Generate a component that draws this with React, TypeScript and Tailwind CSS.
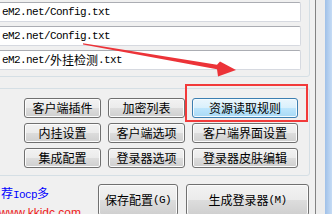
import type { ReactNode } from "react";

const cjk = { fontFamily: '"Noto Sans CJK SC", sans-serif' };
const mono = { fontFamily: '"Liberation Mono", "Noto Sans CJK SC", monospace' };

function Field({ children }: { children: ReactNode }) {
  return (
    <div
      className="flex h-[20px] items-center rounded-[2px] border border-[#d6d9e0] border-t-[#abadb3] bg-white pl-[6px] text-[11px] tracking-[-0.6px] text-black"
      style={mono}
    >
      {children}
    </div>
  );
}

function Cjk({ children }: { children: ReactNode }) {
  return (
    <span className="text-[12px] tracking-normal" style={cjk}>
      {children}
    </span>
  );
}

function WinButton({ label, hot, className = "" }: { label: ReactNode; hot?: boolean; className?: string }) {
  return (
    <button
      className={`flex items-center justify-center rounded-[3px] border text-[12px] leading-none text-black ${
        hot
          ? "border-[#3c7fb1] bg-[linear-gradient(#eaf6fd,#d9f0fc_50%,#bee6fd_50%,#a7d9f5)] shadow-[inset_0_0_0_1px_#f4fbfe]"
          : "border-[#707070] bg-[linear-gradient(#f2f2f2,#ebebeb_50%,#dddddd_50%,#cfcfcf)] shadow-[inset_0_0_0_1px_#fcfcfc]"
      } ${className}`}
      style={cjk}
    >
      {label}
    </button>
  );
}

const grid = [
  "客户端插件", "加密列表", "资源读取规则",
  "内挂设置", "客户端选项", "客户端界面设置",
  "集成配置", "登录器选项", "登录器皮肤编辑",
];

export default function App() {
  return (
    <div className="relative flex h-[214px] w-[332px] overflow-hidden bg-[#f0f0f0]">
      <div className="flex w-[315px] shrink-0 flex-col">
        {/* path fields */}
        <div className="-mt-[10px] -ml-[12px] mr-[5px] flex flex-col gap-[4px] rounded-[3px] border border-[#d5dfe5] pt-[11px] pr-[8px] pb-[6px] pl-[6px]">
          <Field>eM2.net/Config.txt</Field>
          <Field>eM2.net/Config.txt</Field>
          <Field>
            eM2.net/<Cjk>外挂检测</Cjk>.txt
          </Field>
        </div>

        {/* settings buttons */}
        <div className="-ml-[12px] mt-[11px] mr-[5px] rounded-[3px] border border-[#d5dfe5] pt-[9px] pb-[7px] pl-[35px]">
          <div className="grid grid-cols-[77px_77px_106px] gap-x-[7px] gap-y-[5px]">
            {grid.map((g) => (
              <WinButton key={g} label={g} hot={g === "资源读取规则"} className="h-[20px]" />
            ))}
          </div>
        </div>

        <div className="flex">
          <div className="flex w-[98px] shrink-0 flex-col pt-[11px] pl-[1px]">
            <div className="h-[12px] text-[11px] leading-[12px] tracking-[-0.6px] text-[#0000ff]" style={mono}>
              <Cjk>荐</Cjk>Iocp<Cjk>多</Cjk>
            </div>
            <div
              className="-ml-[2px] mt-[7px] text-[12px] leading-[14px] whitespace-nowrap text-[#ee1c1c]"
              style={{ fontFamily: '"Liberation Sans", Arial, sans-serif' }}
            >
              www.kkidc.com
            </div>
          </div>
          <div className="mt-[8px] flex gap-[8px]">
            <WinButton
              className="h-[32px] w-[80px]"
              label={
                <>
                  保存配置
                  <span className="text-[11px] tracking-[-0.6px]" style={mono}>(G)</span>
                </>
              }
            />
            <WinButton
              className="h-[32px] w-[123px]"
              label={
                <>
                  生成登录器
                  <span className="text-[11px] tracking-[-0.6px]" style={mono}>(M)</span>
                </>
              }
            />
          </div>
        </div>
      </div>

      {/* window edge */}
      <div className="w-px shrink-0 bg-[#828282]" />
      <div className="w-[9px] shrink-0 bg-[#ececec]" />
      <div className="flex-1 bg-[linear-gradient(90deg,#9fc0e8,#c6dcf5)]" />

      {/* annotation */}
      <div className="pointer-events-none absolute top-[84px] left-[185px] h-[38px] w-[123px] border-2 border-[#f23a3a]" />
      <svg className="pointer-events-none absolute inset-0" width="332" height="214" viewBox="0 0 332 214">
        <polygon
          points="83,43.3 217,64.8 220,61.5 236,70 218,76.5 217,69.2 83,44.6"
          fill="#ec3338"
        />
      </svg>
    </div>
  );
}
